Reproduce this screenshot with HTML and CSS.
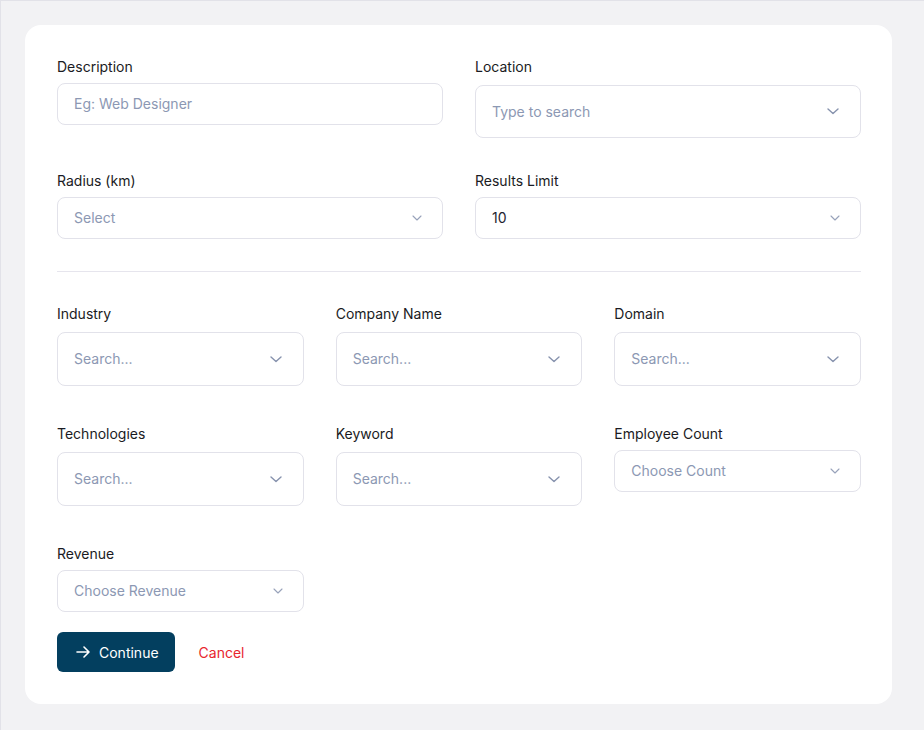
FILE: index.html
```html
<!DOCTYPE html>
<html lang="en">
<head>
<meta charset="utf-8">
<title>Search form</title>
<link rel="stylesheet" href="styles.css">
</head>
<body>
<div class="page">
  <form class="card">
    <div class="grid-2">
      <div class="field">
        <label class="label">Description</label>
        <div class="control control-input"><span class="ph">Eg: Web Designer</span></div>
      </div>
      <div class="field">
        <label class="label">Location</label>
        <div class="control control-search control-loc"><span class="ph">Type to search</span>
          <svg class="chev chev-lg" viewBox="0 0 12 7"><path d="M1 1l5 4.5L11 1"/></svg></div>
      </div>
      <div class="field">
        <label class="label">Radius (km)</label>
        <div class="control control-select"><span class="ph">Select</span>
          <svg class="chev chev-sm" viewBox="0 0 10 6"><path d="M1 1l4 4 4-4"/></svg></div>
      </div>
      <div class="field">
        <label class="label">Results Limit</label>
        <div class="control control-select"><span class="val">10</span>
          <svg class="chev chev-sm" viewBox="0 0 10 6"><path d="M1 1l4 4 4-4"/></svg></div>
      </div>
    </div>

    <hr class="divider">

    <div class="grid-3">
      <div class="field">
        <label class="label">Industry</label>
        <div class="control control-search"><span class="ph">Search...</span>
          <svg class="chev chev-lg" viewBox="0 0 12 7"><path d="M1 1l5 4.5L11 1"/></svg></div>
      </div>
      <div class="field">
        <label class="label">Company Name</label>
        <div class="control control-search"><span class="ph">Search...</span>
          <svg class="chev chev-lg" viewBox="0 0 12 7"><path d="M1 1l5 4.5L11 1"/></svg></div>
      </div>
      <div class="field">
        <label class="label">Domain</label>
        <div class="control control-search"><span class="ph">Search...</span>
          <svg class="chev chev-lg" viewBox="0 0 12 7"><path d="M1 1l5 4.5L11 1"/></svg></div>
      </div>
      <div class="field">
        <label class="label">Technologies</label>
        <div class="control control-search"><span class="ph">Search...</span>
          <svg class="chev chev-lg" viewBox="0 0 12 7"><path d="M1 1l5 4.5L11 1"/></svg></div>
      </div>
      <div class="field">
        <label class="label">Keyword</label>
        <div class="control control-search"><span class="ph">Search...</span>
          <svg class="chev chev-lg" viewBox="0 0 12 7"><path d="M1 1l5 4.5L11 1"/></svg></div>
      </div>
      <div class="field">
        <label class="label">Employee Count</label>
        <div class="control control-select"><span class="ph">Choose Count</span>
          <svg class="chev chev-sm" viewBox="0 0 10 6"><path d="M1 1l4 4 4-4"/></svg></div>
      </div>
      <div class="field">
        <label class="label">Revenue</label>
        <div class="control control-select"><span class="ph">Choose Revenue</span>
          <svg class="chev chev-sm" viewBox="0 0 10 6"><path d="M1 1l4 4 4-4"/></svg></div>
      </div>
    </div>

    <div class="actions">
      <button type="button" class="btn-primary">
        <svg class="arrow" viewBox="0 0 14 12"><path d="M1 6h12M8 1l5 5-5 5"/></svg>
        Continue
      </button>
      <button type="button" class="btn-link">Cancel</button>
    </div>
  </form>
</div>
</body>
</html>
```

FILE: styles.css
```css
* { box-sizing: border-box; }
html, body { margin: 0; padding: 0; }
body {
  background: #f2f2f4;
  font-family: Inter, "Noto Sans", "Liberation Sans", sans-serif;
  font-size: 14px;
  color: #1f2230;
}
.page {
  min-height: 730px;
  border-top: 1px solid #e2e2e8;
  border-left: 1px solid #e2e2e8;
  padding: 24px 32px 27px 24px;
}
.card {
  background: #ffffff;
  border-radius: 16px;
  padding: 32px 31px 32px 32px;
  width: 867px;
}
.grid-2 {
  display: grid;
  grid-template-columns: 1fr 1fr;
  column-gap: 32px;
  row-gap: 33px;
  align-items: start;
}
.grid-3 {
  display: grid;
  grid-template-columns: 1fr 1fr 1fr;
  column-gap: 32px;
  row-gap: 38px;
  align-items: start;
}
.field { display: flex; flex-direction: column; }
.label {
  font-size: 14px;
  line-height: 20px;
  font-weight: 400;
  color: #1a1b23;
}
.control {
  display: flex;
  align-items: center;
  justify-content: space-between;
  border: 1px solid #e2e2ea;
  border-radius: 8px;
  background: #fff;
  padding: 0 16px;
  font-size: 14px;
  line-height: 18px;
}
.control-input, .control-select { height: 42px; margin-top: 6px; }
.control-search { height: 54px; margin-top: 8px; padding-right: 21px; }
.control-loc { height: 53px; }
.control-select { padding-right: 20px; }
.ph { color: #8c98b3; }
.val { color: #1f2230; }
.chev { fill: none; stroke-linecap: round; stroke-linejoin: round; }
.chev-lg { width: 12px; height: 7px; stroke: #8692ad; stroke-width: 1.4; }
.chev-sm { width: 10px; height: 6px; stroke: #98a2ba; stroke-width: 1.1; }
.divider {
  border: 0;
  border-top: 1px solid #e6e5ed;
  margin: 32px 0;
}
.actions {
  display: flex;
  align-items: center;
  gap: 24px;
  margin-top: 20px;
}
.btn-primary {
  display: flex;
  align-items: center;
  gap: 9px;
  height: 40px;
  padding: 0 16px 0 19px;
  background: #033f5f;
  color: #fff;
  border: 0;
  border-radius: 6px;
  font-family: inherit;
  font-size: 14px;
  font-weight: 400;
}
.arrow { width: 14px; height: 12px; fill: none; stroke: #fff; stroke-width: 1.6; stroke-linecap: round; stroke-linejoin: round; }
.btn-link {
  background: none;
  border: 0;
  padding: 0;
  font-family: inherit;
  font-size: 14px;
  color: #e8262e;
}
```
